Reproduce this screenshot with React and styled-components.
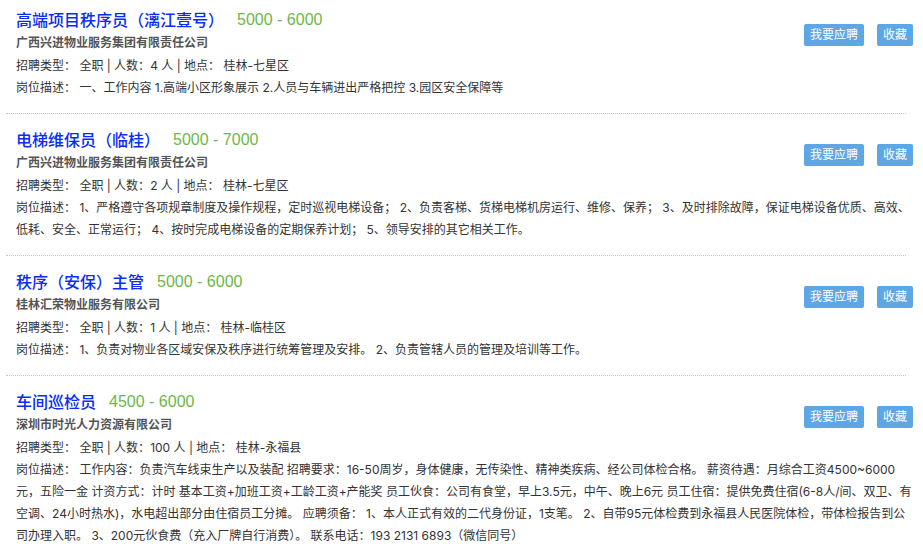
import styled, { createGlobalStyle } from 'styled-components';

const GlobalStyle = createGlobalStyle`
  body {
    margin: 0;
    background: #fff;
    font-family: Inter, "Noto Sans CJK SC", sans-serif;
  }
`;

const JobList = styled.ul`
  list-style: none;
  margin: 0;
  padding: 0 10px 0 6px;
`;

const JobItem = styled.li`
  padding: 14px 0 0 10px;

  &:first-child {
    padding-top: 8px;
  }
`;

const Actions = styled.div`
  float: right;
  display: flex;
  gap: 13px;
  margin-top: 16px;
`;

const ActionButton = styled.button`
  height: 22px;
  padding: 0 6px;
  border: 0;
  border-radius: 2px;
  background: #5ea7e4;
  color: #fff;
  font-family: inherit;
  font-size: 12px;
  line-height: 22px;
  cursor: pointer;
`;

const TitleRow = styled.div`
  display: flex;
  align-items: center;
  gap: 13px;
  height: 24px;
  line-height: 24px;
`;

const JobTitle = styled.h3`
  margin: 0;
  font-size: 16px;
  font-weight: 500;
  color: #0a2cf5;
`;

const Salary = styled.span`
  font-family: "Liberation Sans", sans-serif;
  font-size: 16px;
  color: #6cb84a;
`;

const Company = styled.div`
  height: 22px;
  font-size: 12px;
  font-weight: 700;
  line-height: 22px;
  color: #555;
`;

const Info = styled.div`
  height: 22px;
  margin-top: 1px;
  font-size: 12px;
  line-height: 22px;
  color: #333;
`;

const Desc = styled.p`
  margin: 0;
  padding-bottom: 14px;
  font-size: 12px;
  line-height: 22px;
  color: #333;
`;

const Divider = styled.div`
  clear: both;
  border-top: 1px dotted #c4c4c4;
  margin: 0 7px 0 -10px;
`;

const jobs = [
  {
    id: 1,
    title: '高端项目秩序员（漓江壹号）',
    salary: '5000 - 6000',
    company: '广西兴进物业服务集团有限责任公司',
    count: 4,
    place: '桂林-七星区',
    desc: '一、工作内容 1.高端小区形象展示 2.人员与车辆进出严格把控 3.园区安全保障等',
  },
  {
    id: 2,
    title: '电梯维保员（临桂）',
    salary: '5000 - 7000',
    company: '广西兴进物业服务集团有限责任公司',
    count: 2,
    place: '桂林-七星区',
    desc: '1、严格遵守各项规章制度及操作规程，定时巡视电梯设备； 2、负责客梯、货梯电梯机房运行、维修、保养； 3、及时排除故障，保证电梯设备优质、高效、低耗、安全、正常运行； 4、按时完成电梯设备的定期保养计划； 5、领导安排的其它相关工作。',
  },
  {
    id: 3,
    title: '秩序（安保）主管',
    salary: '5000 - 6000',
    company: '桂林汇荣物业服务有限公司',
    count: 1,
    place: '桂林-临桂区',
    desc: '1、负责对物业各区域安保及秩序进行统筹管理及安排。 2、负责管辖人员的管理及培训等工作。',
  },
  {
    id: 4,
    title: '车间巡检员',
    salary: '4500 - 6000',
    company: '深圳市时光人力资源有限公司',
    count: 100,
    place: '桂林-永福县',
    desc: '工作内容：负责汽车线束生产以及装配 招聘要求：16-50周岁，身体健康，无传染性、精神类疾病、经公司体检合格。 薪资待遇：月综合工资4500~6000元，五险一金 计资方式：计时 基本工资+加班工资+工龄工资+产能奖 员工伙食：公司有食堂，早上3.5元，中午、晚上6元 员工住宿：提供免费住宿(6-8人/间、双卫、有空调、24小时热水)，水电超出部分由住宿员工分摊。 应聘须备： 1、本人正式有效的二代身份证，1支笔。 2、自带95元体检费到永福县人民医院体检，带体检报告到公司办理入职。 3、200元伙食费（充入厂牌自行消费）。 联系电话：193 2131 6893（微信同号）',
  },
];

function App() {
  return (
    <>
      <GlobalStyle />
      <JobList>
        {jobs.map((job) => (
          <JobItem key={job.id}>
            <Actions>
              <ActionButton>我要应聘</ActionButton>
              <ActionButton>收藏</ActionButton>
            </Actions>
            <TitleRow>
              <JobTitle>{job.title}</JobTitle>
              <Salary>{job.salary}</Salary>
            </TitleRow>
            <Company>{job.company}</Company>
            <Info>
              招聘类型： 全职 | 人数：{job.count} 人 | 地点： {job.place}
            </Info>
            <Desc>岗位描述： {job.desc}</Desc>
            <Divider />
          </JobItem>
        ))}
      </JobList>
    </>
  );
}

export default App;
